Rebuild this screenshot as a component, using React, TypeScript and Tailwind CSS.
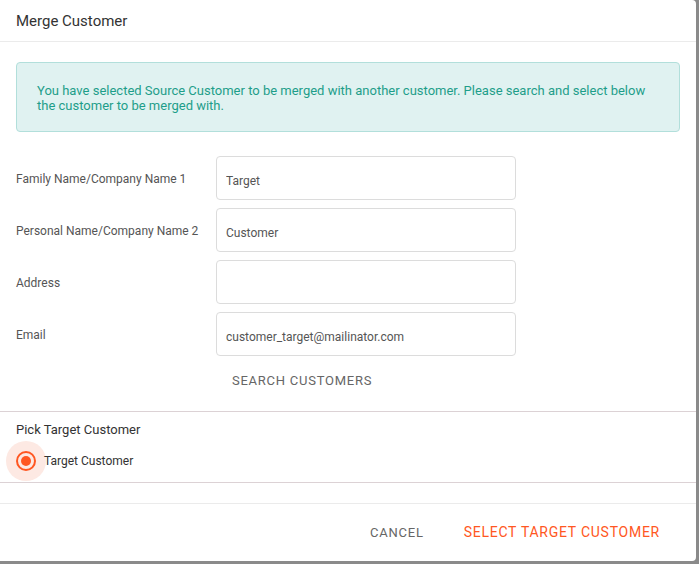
import { useState } from "react"

const fields = [
  { label: "Family Name/Company Name 1", value: "Target" },
  { label: "Personal Name/Company Name 2", value: "Customer" },
  { label: "Address", value: "" },
  { label: "Email", value: "customer_target@mailinator.com" },
]

export default function App() {
  const [picked, setPicked] = useState(true)

  return (
    <div className="w-[699px] h-[564px] bg-[#8a8a8a] font-['Roboto',sans-serif]">
      <div className="w-[696px] h-[561px] bg-white rounded-r flex flex-col">
        <div className="h-[42px] border-b border-[#ebebeb] flex items-center px-4 pt-[1px]">
          <h2 className="text-[15px] text-[#333]">Merge Customer</h2>
        </div>

        <div className="px-4 pt-5">
          <div className="h-[70px] bg-[#e0f2f1] border border-[#b2dfdb] rounded flex items-center px-5 pt-[1px]">
            <p className="text-[13px] leading-[15px] text-[#1e9e8a]">
              You have selected Source Customer to be merged with another customer. Please search and select below
              the customer to be merged with.
            </p>
          </div>
        </div>

        <div className="px-4 pt-6 flex flex-col gap-2">
          {fields.map((f) => (
            <div key={f.label} className="flex items-center">
              <label className="w-[200px] text-[12px] text-[#555] pt-[1px]">{f.label}</label>
              <input
                defaultValue={f.value}
                className="w-[300px] h-[44px] border border-[#dcdcdc] rounded px-[9px] pt-[5px] text-[12px] text-[#555] outline-none"
              />
            </div>
          ))}
        </div>

        <div className="pl-[232px] pt-[12px] h-[55px]">
          <button className="text-[13px] tracking-[0.75px] text-[#666] uppercase">Search Customers</button>
        </div>

        <div className="border-t border-[#dcd2d5] px-4 pt-[8px]">
          <div className="text-[13px] text-[#333]">Pick Target Customer</div>
          <label className="flex items-center h-[42px]" onClick={() => setPicked(true)}>
            <span className="relative w-[20px] h-[20px] flex items-center justify-center">
              <span className="absolute -inset-[10px] rounded-full bg-[#fde9e3]" />
              <span className="relative w-[20px] h-[20px] rounded-full border-2 border-[#ff5722] flex items-center justify-center">
                {picked && <span className="w-[10px] h-[10px] rounded-full bg-[#ff5722]" />}
              </span>
            </span>
            <span className="relative ml-[8px] text-[12px] text-[#333]">Target Customer</span>
          </label>
        </div>

        <div className="border-t border-[#dcd2d5] h-[21px]" />

        <div className="border-t border-[#ebebeb] flex-1 flex items-center justify-end gap-10 pr-[36px] pt-[1px]">
          <button className="text-[13px] tracking-[0.75px] text-[#666] uppercase">Cancel</button>
          <button className="text-[14px] tracking-[0.75px] text-[#ff5722] uppercase">Select Target Customer</button>
        </div>
      </div>
    </div>
  )
}
